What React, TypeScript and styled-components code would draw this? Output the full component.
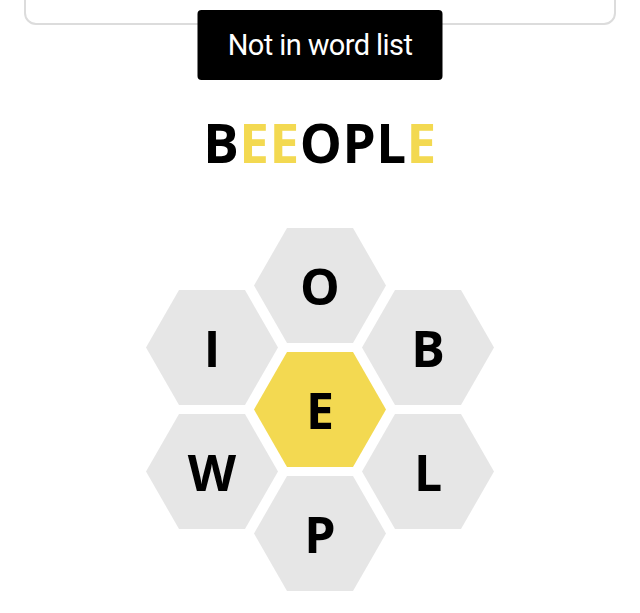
import styled, { createGlobalStyle } from "styled-components";

const GlobalStyle = createGlobalStyle`
  html, body {
    margin: 0;
    padding: 0;
    background: #ffffff;
  }
  body {
    font-family: "Open Sans", "Liberation Sans", sans-serif;
    overflow: hidden;
  }
`;

const yellow = "#f3d951";
const gray = "#e6e6e6";

type TitleLetter = { ch: string; center: boolean };

const word: TitleLetter[] = [
  { ch: "B", center: false },
  { ch: "E", center: true },
  { ch: "E", center: true },
  { ch: "O", center: false },
  { ch: "P", center: false },
  { ch: "L", center: false },
  { ch: "E", center: true },
];

const hiveColumns: { letter: string; center?: boolean }[][] = [
  [{ letter: "I" }, { letter: "W" }],
  [{ letter: "O" }, { letter: "E", center: true }, { letter: "P" }],
  [{ letter: "B" }, { letter: "L" }],
];

export default function App() {
  return (
    <Page>
      <GlobalStyle />
      <WordBox />
      <Toast>Not in word list</Toast>
      <Title>
        {word.map((l, i) => (
          <TitleChar key={i} $center={l.center}>
            {l.ch}
          </TitleChar>
        ))}
      </Title>
      <Hive>
        {hiveColumns.map((col, i) => (
          <HiveColumn key={i}>
            {col.map((cell) => (
              <Cell key={cell.letter} $center={cell.center}>
                {cell.letter}
              </Cell>
            ))}
          </HiveColumn>
        ))}
      </Hive>
    </Page>
  );
}

const Page = styled.div`
  position: relative;
  width: 640px;
  height: 613px;
  display: flex;
  flex-direction: column;
  align-items: center;
`;

const WordBox = styled.div`
  align-self: stretch;
  margin: -20px 24px 0 24px;
  height: 41px;
  border: 2px solid #dcdcdc;
  border-radius: 12px;
`;

const Toast = styled.div`
  position: absolute;
  top: 10px;
  left: 50%;
  transform: translateX(-50%);
  width: 245px;
  height: 70px;
  box-sizing: border-box;
  display: flex;
  align-items: center;
  justify-content: center;
  background: #000000;
  color: #ffffff;
  border-radius: 4px;
  font-family: "Roboto", "Liberation Sans", sans-serif;
  font-weight: 400;
  font-size: 29px;
  letter-spacing: -0.6px;
`;

const Title = styled.div`
  margin-top: 91px;
  display: flex;
  font-size: 53px;
  line-height: 1;
  font-weight: 700;
  letter-spacing: 0.5px;
`;

const TitleChar = styled.span<{ $center?: boolean }>`
  color: ${(p) => (p.$center ? yellow : "#000000")};
`;

const Hive = styled.div`
  margin-top: 59px;
  display: flex;
  align-items: center;
`;

const HiveColumn = styled.div`
  display: flex;
  flex-direction: column;
  gap: 9px;
  margin: 0 -12px;
`;

const Cell = styled.div<{ $center?: boolean }>`
  width: 132px;
  height: 115px;
  display: flex;
  align-items: center;
  justify-content: center;
  background: ${(p) => (p.$center ? yellow : gray)};
  clip-path: polygon(25% 0, 75% 0, 100% 50%, 75% 100%, 25% 100%, 0 50%);
  font-size: 50px;
  line-height: 1;
  font-weight: 700;
  color: #000000;
`;
